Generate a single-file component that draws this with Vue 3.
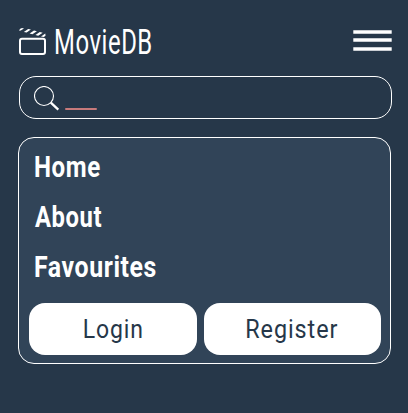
<script setup>
const links = ['Home', 'About', 'Favourites']
</script>

<template>
  <div class="page">
    <header class="header">
      <div class="brand">
        <svg class="clapper" width="28" height="29" viewBox="0 0 28 29">
          <rect x="1" y="11.7" width="25" height="15.3" rx="2" fill="none" stroke="#fff" stroke-width="2" />
          <path d="M.3 4 L.8 1.9 L3 1 L5 1.4 L2.2 3.2Z M4.8 4.9 L9.2 1.9 L11.9 2.6 L7.6 5.6Z M10.6 6.4 L15 3.4 L17.9 4.2 L13.4 7.2Z M16.4 8 L20.8 5 L23.7 5.7 L19.2 8.7Z M22 9.4 L26.3 6.5 L26.5 8.8 L24.8 9.9Z" fill="#fff" />
        </svg>
        <span class="title">MovieDB</span>
      </div>
      <svg class="menu" width="39" height="21" viewBox="0 0 39 21">
        <path d="M.3 2H38.7 M.3 10H38.7 M.3 19H38.7" stroke="#fff" stroke-width="3.3" />
      </svg>
    </header>

    <div class="search">
      <svg width="26" height="26" viewBox="0 0 26 26" fill="none" stroke="#fff">
        <circle cx="10" cy="10" r="9.5" stroke-width="1.1" />
        <path d="M16.8 16.6L24.3 23.6" stroke-width="2.3" />
      </svg>
      <span class="caret"></span>
    </div>

    <nav class="panel">
      <a v-for="link in links" :key="link" class="link"><span :class="link.toLowerCase()">{{ link }}</span></a>
      <div class="actions">
        <button class="login"><span>Login</span></button>
        <button class="register"><span>Register</span></button>
      </div>
    </nav>
  </div>
</template>

<style>
body {
  background: #263749;
}
</style>

<style scoped>
* {
  box-sizing: border-box;
}
.page {
  height: 413px;
  padding: 27px 16px 0 18px;
  background: #263749;
  color: #fff;
  font-family: Roboto, "Liberation Sans", sans-serif;
}
.header {
  display: flex;
  justify-content: space-between;
  height: 49px;
}
.brand {
  display: flex;
  gap: 7px;
}
.clapper {
  margin-left: 1px;
}
.title {
  font-size: 35px;
  font-weight: 400;
  line-height: 31px;
  letter-spacing: .8px;
  white-space: nowrap;
  transform: scaleX(.683);
  transform-origin: left;
}
.menu {
  margin-top: 3px;
}
.search {
  display: flex;
  width: 373px;
  height: 43px;
  margin-left: 1px;
  padding: 9px 14px;
  border: 1px solid #fff;
  border-radius: 17px;
}
.caret {
  width: 32px;
  height: 2px;
  margin: 22px 0 0 5px;
  border-radius: 1px;
  background: #c77a7b;
}
.panel {
  width: 373px;
  height: 227px;
  margin-top: 18px;
  padding: 5px 9px 0 10px;
  border: 1px solid #fff;
  border-radius: 16px;
  background: #314458;
}
.link {
  display: block;
  height: 50px;
  padding-left: 5px;
  font-size: 29px;
  font-weight: 700;
  line-height: 49px;
}
.link span {
  display: inline-block;
  letter-spacing: .7px;
  transform: scaleX(.84);
  transform-origin: left;
}
.link .home {
  transform: scaleX(.83);
}
.link .about {
  transform: translateX(1px) scaleX(.82);
}
.link .favourites {
  transform: scaleX(.857);
}
.actions {
  display: flex;
  gap: 7px;
  margin-top: 10px;
}
button {
  height: 52px;
  padding: 0;
  border: 0;
  border-radius: 16px;
  background: #fff;
  color: #263749;
  font: 400 25px/53px Roboto, "Liberation Sans", sans-serif;
  letter-spacing: 1px;
}
button span {
  display: inline-block;
  transform: scaleX(.92);
}
.login {
  width: 168px;
}
.register {
  width: 177px;
}
.register span {
  transform: translateX(-1px) scaleX(.935);
}
</style>
